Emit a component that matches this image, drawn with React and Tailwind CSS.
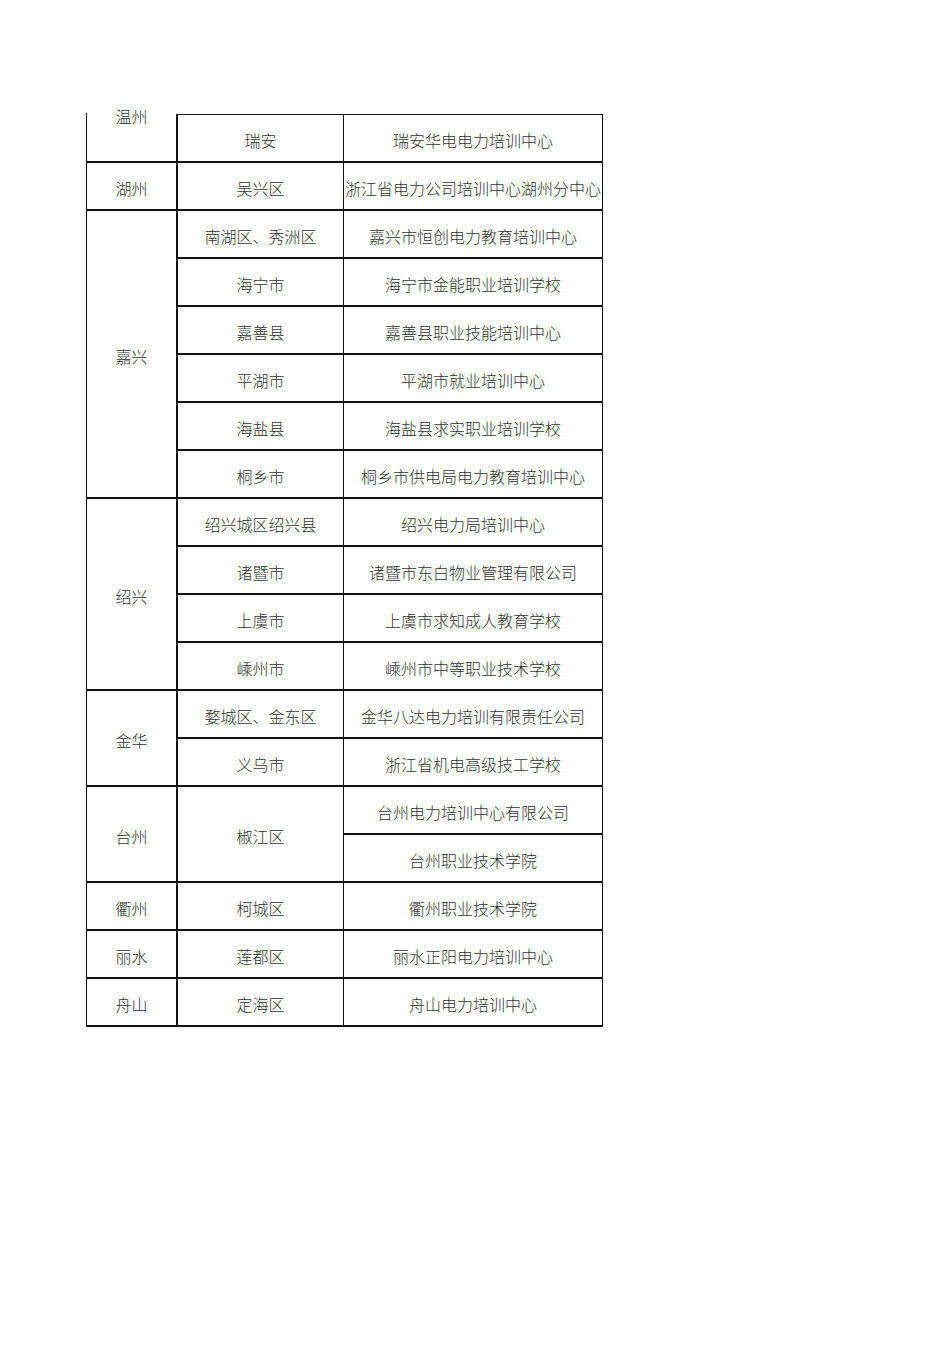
const groups = [
  { city: "温州", top: true, districts: [{ name: "瑞安", orgs: ["瑞安华电电力培训中心"] }] },
  { city: "湖州", districts: [{ name: "吴兴区", orgs: ["浙江省电力公司培训中心湖州分中心"] }] },
  {
    city: "嘉兴",
    districts: [
      { name: "南湖区、秀洲区", orgs: ["嘉兴市恒创电力教育培训中心"] },
      { name: "海宁市", orgs: ["海宁市金能职业培训学校"] },
      { name: "嘉善县", orgs: ["嘉善县职业技能培训中心"] },
      { name: "平湖市", orgs: ["平湖市就业培训中心"] },
      { name: "海盐县", orgs: ["海盐县求实职业培训学校"] },
      { name: "桐乡市", orgs: ["桐乡市供电局电力教育培训中心"] },
    ],
  },
  {
    city: "绍兴",
    districts: [
      { name: "绍兴城区绍兴县", orgs: ["绍兴电力局培训中心"] },
      { name: "诸暨市", orgs: ["诸暨市东白物业管理有限公司"] },
      { name: "上虞市", orgs: ["上虞市求知成人教育学校"] },
      { name: "嵊州市", orgs: ["嵊州市中等职业技术学校"] },
    ],
  },
  {
    city: "金华",
    districts: [
      { name: "婺城区、金东区", orgs: ["金华八达电力培训有限责任公司"] },
      { name: "义乌市", orgs: ["浙江省机电高级技工学校"] },
    ],
  },
  {
    city: "台州",
    districts: [{ name: "椒江区", orgs: ["台州电力培训中心有限公司", "台州职业技术学院"] }],
  },
  { city: "衢州", districts: [{ name: "柯城区", orgs: ["衢州职业技术学院"] }] },
  { city: "丽水", districts: [{ name: "莲都区", orgs: ["丽水正阳电力培训中心"] }] },
  { city: "舟山", districts: [{ name: "定海区", orgs: ["舟山电力培训中心"] }] },
];

const font = { fontFamily: '"Liberation Serif", "Noto Sans CJK SC", serif' };

export default function App() {
  return (
    <div className="min-h-[1345px] w-[950px] bg-white text-[16px] font-light leading-none text-[#333]" style={font}>
      <div className="pt-[114px] pl-[86px]">
        {groups.map((g, gi) => (
          <div key={gi} className="flex">
            <div
              className={
                g.top
                  ? "flex w-[90px] justify-center border-l border-b-2 border-[#111] -mt-[1px]"
                  : "flex w-[90px] items-center justify-center border-l border-b-2 border-[#111] pt-[8px]"
              }
            >
              <span className={g.top ? "-mt-[3px]" : ""}>{g.city}</span>
            </div>
            <div className={g.top ? "flex flex-col border-t border-[#111]" : "flex flex-col"}>
              {g.districts.map((d, di) => (
                <div key={di} className="flex">
                  <div className="flex w-[167px] items-center justify-center border-l-2 border-b-2 border-[#111] pt-[8px]">
                    {d.name}
                  </div>
                  <div className="flex flex-col">
                    {d.orgs.map((o, oi) => (
                      <div
                        key={oi}
                        className="flex h-[48px] w-[260px] items-center justify-center whitespace-nowrap border-x border-b-2 border-[#111] pt-[8px]"
                      >
                        {o}
                      </div>
                    ))}
                  </div>
                </div>
              ))}
            </div>
          </div>
        ))}
      </div>
    </div>
  );
}
